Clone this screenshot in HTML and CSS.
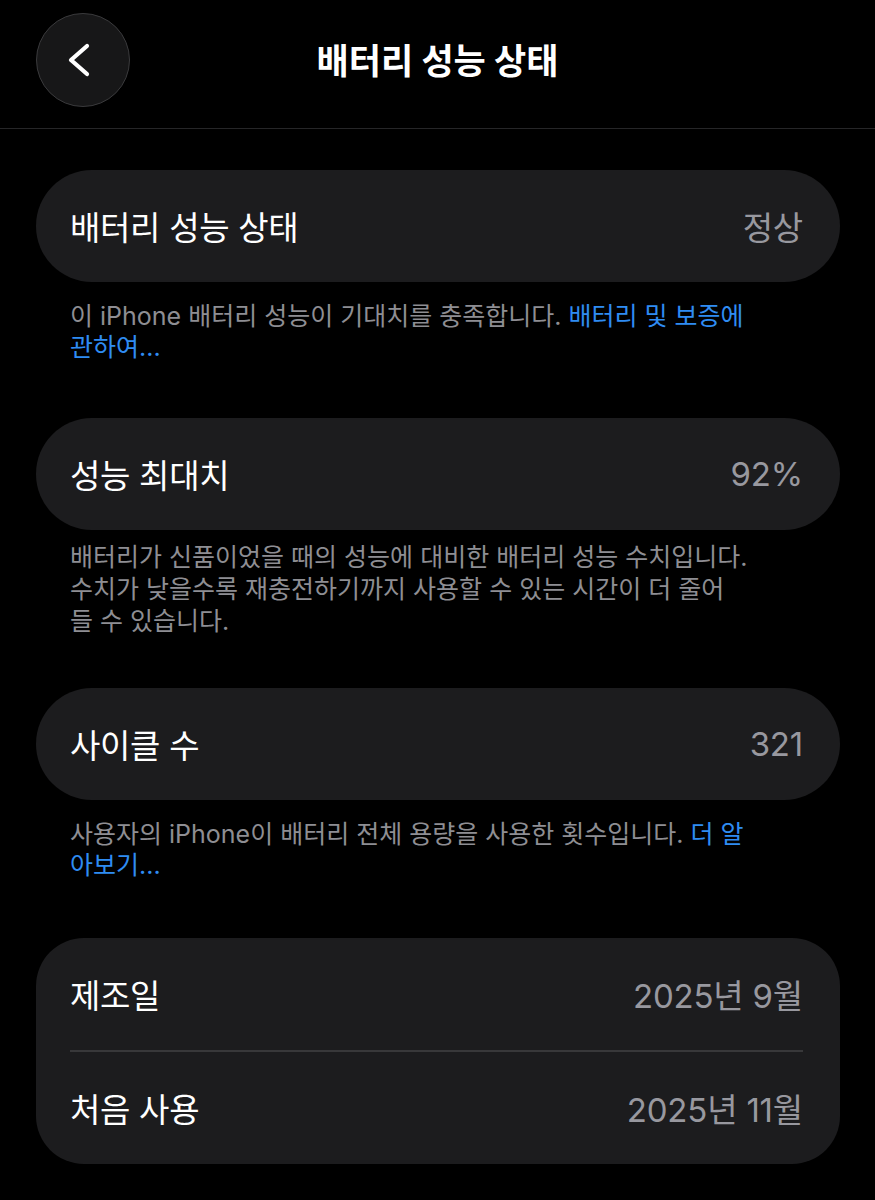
FILE: index.html
```html
<!DOCTYPE html>
<html lang="ko">
<head>
<meta charset="utf-8">
<title>배터리 성능 상태</title>
<link rel="stylesheet" href="styles.css">
</head>
<body>
<header class="nav">
  <button class="back" aria-label="뒤로">
    <svg width="40" height="40" viewBox="0 0 40 40" fill="none">
      <path d="M27 6 L11 20 L27 34" stroke="#ffffff" stroke-width="4.2" stroke-linecap="round" stroke-linejoin="round"/>
    </svg>
  </button>
  <h1 class="title">배터리 성능 상태</h1>
  <span class="spacer"></span>
</header>
<main class="content">
  <section class="card">
    <div class="row"><span class="label">배터리 성능 상태</span><span class="value">정상</span></div>
  </section>
  <p class="caption">이 iPhone 배터리 성능이 기대치를 충족합니다. <a class="link">배터리 및 보증에<br>관하여...</a></p>

  <section class="card">
    <div class="row"><span class="label">성능 최대치</span><span class="value">92%</span></div>
  </section>
  <p class="caption tight">배터리가 신품이었을 때의 성능에 대비한 배터리 성능 수치입니다.<br>수치가 낮을수록 재충전하기까지 사용할 수 있는 시간이 더 줄어<br>들 수 있습니다.</p>

  <section class="card">
    <div class="row"><span class="label">사이클 수</span><span class="value">321</span></div>
  </section>
  <p class="caption last">사용자의 iPhone이 배터리 전체 용량을 사용한 횟수입니다. <a class="link">더 알<br>아보기...</a></p>

  <section class="card group">
    <div class="row"><span class="label">제조일</span><span class="value">2025년 9월</span></div>
    <div class="sep"></div>
    <div class="row"><span class="label">처음 사용</span><span class="value">2025년 11월</span></div>
  </section>
</main>
</body>
</html>
```
FILE: styles.css
```css
* { box-sizing: border-box; }
html, body {
  margin: 0;
  padding: 0;
  background: #000;
}
body {
  font-family: Inter, "Noto Sans CJK KR", sans-serif;
  color: #fff;
  width: 875px;
}
.nav {
  height: 129px;
  border-bottom: 1px solid #262628;
  display: grid;
  grid-template-columns: 1fr auto 1fr;
  align-items: start;
  padding: 0 36px;
}
.back {
  width: 94px;
  height: 94px;
  margin-top: 13px;
  border-radius: 50%;
  background: #171718;
  border: 1px solid #3a3a3c;
  display: flex;
  align-items: center;
  justify-content: center;
  padding: 0 6px 0 0;
  justify-self: start;
}
.title {
  margin: 0;
  font-size: 35px;
  font-weight: 700;
  line-height: 44px;
  margin-top: 39px;
}
.content {
  padding: 41px 35px 0 36px;
}
.card {
  background: #1c1c1e;
  border-radius: 56px;
  padding: 0 37px 0 34px;
}
.card.group {
  border-radius: 48px;
}
.row {
  height: 112px;
  display: flex;
  align-items: center;
  justify-content: space-between;
  font-size: 33px;
}
.label {
  color: #fff;
  letter-spacing: -0.3px;
}
.value {
  color: #98989f;
  letter-spacing: -0.2px;
}
.sep {
  height: 2px;
  background: #38383a;
}
.caption {
  margin: 19px 0 55px;
  padding: 0 34px;
  font-size: 25px;
  line-height: 31px;
  color: #8e8e93;
}
.caption.tight {
  margin-top: 11px;
  line-height: 32px;
  margin-bottom: 51px;
}
.caption.last {
  margin-bottom: 57px;
}
.link {
  color: #2f8cf2;
  text-decoration: none;
}
```
